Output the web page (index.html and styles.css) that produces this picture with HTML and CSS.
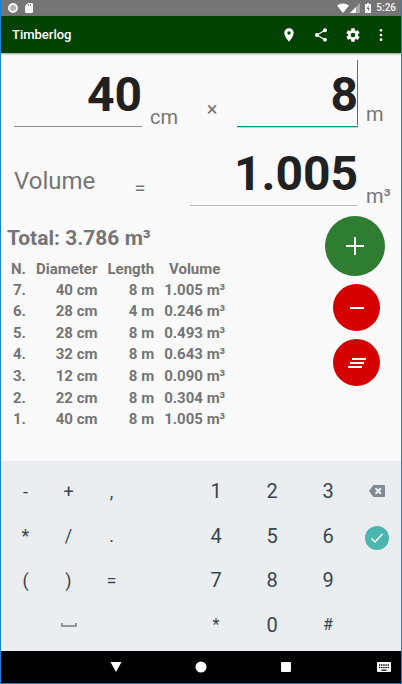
FILE: index.html
```
<!DOCTYPE html>
<html lang="en">
<head>
    <meta charset="UTF-8">
    <meta name="viewport" content="width=device-width, initial-scale=1.0">
    <title>Timberlog</title>
    <link rel="stylesheet" href="styles.css">
</head>
<body>
    <!-- Status Bar -->
    <div class="status-bar">
        <div class="status-group">
            <svg width="10" height="10" viewBox="0 0 10 10"><circle cx="5" cy="5" r="4" fill="#b5b5b5" stroke="#f5f5f5" stroke-width="2"/></svg>
            <svg class="sd-icon" width="8" height="10" viewBox="0 0 8 10"><path fill="#f5f5f5" d="M3 0h4a1 1 0 0 1 1 1v8a1 1 0 0 1-1 1H1a1 1 0 0 1-1-1V3z"/><path stroke="#999" d="M3.500 1v2M5.500 1v2"/></svg>
        </div>
        <div class="status-group status-right">
            <svg width="12" height="10" viewBox="0 0 12 10"><path fill="#fff" d="M0 2.500C3.500-.3 8.500-.3 12 2.500L6 10z"/></svg>
            <svg width="10" height="10" viewBox="0 0 10 10"><path fill="#a8a8a8" d="M10 0v10H0z"/><path fill="#f5f5f5" d="M6 4v6H0z"/></svg>
            <svg class="battery-icon" width="6" height="10" viewBox="0 0 6 10"><path fill="#f5f5f5" d="M2 0h2v1h2v9H0V1h2z"/><path fill="#757575" d="M3.500 2.500 1.500 6H3v2.500L4.700 5H3.500z"/></svg>
            <span class="clock">5:26</span>
        </div>
    </div>

    <!-- App Bar -->
    <header class="app-bar">
        <h1 class="app-title">Timberlog</h1>
        <button class="bar-button" aria-label="Location">
            <svg width="16" height="16" viewBox="0 0 24 24"><path d="M12 2C8.130 2 5 5.130 5 9c0 5.250 7 13 7 13s7-7.750 7-13c0-3.870-3.130-7-7-7zm0 9.500a2.500 2.500 0 1 1 0-5 2.500 2.500 0 0 1 0 5z"/></svg>
        </button>
        <button class="bar-button" aria-label="Share">
            <svg width="16" height="16" viewBox="0 0 24 24"><path d="M18 16.080c-.76 0-1.440.3-1.960.77L8.910 12.700c.05-.23.09-.46.09-.7s-.04-.47-.09-.7l7.050-4.110c.54.5 1.250.81 2.040.81 1.660 0 3-1.340 3-3s-1.340-3-3-3-3 1.340-3 3c0 .24.04.47.09.7L8.040 9.810C7.500 9.310 6.790 9 6 9c-1.660 0-3 1.340-3 3s1.340 3 3 3c.79 0 1.500-.31 2.040-.81l7.120 4.160c-.05.21-.08.43-.08.65 0 1.610 1.310 2.920 2.920 2.920s2.920-1.310 2.920-2.920-1.310-2.920-2.920-2.920z"/></svg>
        </button>
        <button class="bar-button" aria-label="Settings">
            <svg width="16" height="16" viewBox="0 0 24 24"><path d="M19.430 12.980c.04-.32.07-.64.07-.98s-.03-.66-.07-.98l2.110-1.650c.19-.15.24-.42.12-.64l-2-3.460c-.12-.22-.39-.3-.61-.22l-2.490 1c-.52-.4-1.080-.73-1.690-.98l-.38-2.650C14.460 2.180 14.250 2 14 2h-4c-.25 0-.46.18-.49.42l-.38 2.650c-.61.25-1.170.59-1.690.98l-2.490-1c-.23-.09-.49 0-.61.22l-2 3.460c-.13.22-.07.49.12.64l2.110 1.650c-.04.32-.07.65-.07.98s.03.66.07.98l-2.110 1.650c-.19.15-.24.42-.12.64l2 3.460c.12.22.39.3.61.22l2.490-1c.52.4 1.080.73 1.690.98l.38 2.650c.03.24.24.42.49.42h4c.25 0 .46-.18.49-.42l.38-2.650c.61-.25 1.170-.59 1.690-.98l2.490 1c.23.09.49 0 .61-.22l2-3.460c.12-.22.07-.49-.12-.64l-2.110-1.650zM12 15.500a3.500 3.500 0 1 1 0-7 3.500 3.500 0 0 1 0 7z"/></svg>
        </button>
        <button class="bar-button more" aria-label="More">
            <svg width="16" height="16" viewBox="0 0 24 24"><circle cx="12" cy="5" r="2"/><circle cx="12" cy="12" r="2"/><circle cx="12" cy="19" r="2"/></svg>
        </button>
    </header>

    <!-- Calculator -->
    <main class="content">
        <div class="row">
            <div class="field diameter">
                <input id="diameter" type="text" value="40" aria-label="Diameter">
            </div>
            <label class="unit cm" for="diameter">cm</label>
            <span class="operator times">×</span>
            <div class="field length active">
                <input id="length" type="text" value="8" aria-label="Length">
                <span class="caret"></span>
            </div>
            <label class="unit raised" for="length">m</label>
        </div>
        <div class="row">
            <label class="volume-label" for="volume">Volume</label>
            <span class="operator equals">=</span>
            <div class="field result">
                <input id="volume" type="text" value="1.005" readonly>
            </div>
            <span class="unit">m³</span>
        </div>

        <!-- Log -->
        <div class="log">
            <div class="log-list">
                <h2 class="total">Total: 3.786 m³</h2>
                <table class="log-table">
                    <thead>
                        <tr><th>N.</th><th>Diameter</th><th>Length</th><th class="center">Volume</th></tr>
                    </thead>
                    <tbody>
                        <tr><td>7.</td><td>40 cm</td><td>8 m</td><td>1.005 m³</td></tr>
                        <tr><td>6.</td><td>28 cm</td><td>4 m</td><td>0.246 m³</td></tr>
                        <tr><td>5.</td><td>28 cm</td><td>8 m</td><td>0.493 m³</td></tr>
                        <tr><td>4.</td><td>32 cm</td><td>8 m</td><td>0.643 m³</td></tr>
                        <tr><td>3.</td><td>12 cm</td><td>8 m</td><td>0.090 m³</td></tr>
                        <tr><td>2.</td><td>22 cm</td><td>8 m</td><td>0.304 m³</td></tr>
                        <tr><td>1.</td><td>40 cm</td><td>8 m</td><td>1.005 m³</td></tr>
                    </tbody>
                </table>
            </div>
            <div class="actions">
                <button class="fab add" aria-label="Add">
                    <svg width="20" height="20" viewBox="0 0 20 20"><path d="M10 1v18M1 10h18" stroke="#fff" stroke-width="2"/></svg>
                </button>
                <button class="fab remove" aria-label="Remove last">
                    <svg width="20" height="20" viewBox="0 0 20 20"><path d="M3 10h14" stroke="#fff" stroke-width="2"/></svg>
                </button>
                <button class="fab remove" aria-label="Clear all">
                    <svg width="20" height="20" viewBox="0 0 20 20"><path d="M5 6h14M3 10h14M1 14h14" stroke="#fff" stroke-width="2"/></svg>
                </button>
            </div>
        </div>
    </main>

    <!-- Keyboard -->
    <div class="keyboard">
        <button class="key symbol">-</button>
        <button class="key symbol">+</button>
        <button class="key symbol">,</button>
        <span></span>
        <button class="key">1</button>
        <button class="key">2</button>
        <button class="key">3</button>
        <div class="key-actions">
            <button class="key backspace" aria-label="Backspace">
                <svg width="16" height="12" viewBox="0 0 16 12"><path fill="#808b91" d="M5 0h10a1 1 0 0 1 1 1v10a1 1 0 0 1-1 1H5q-.8 0-1.200-.7L0 6 3.800.7Q4.200 0 5 0z"/><path stroke="#ebeef1" stroke-width="2" d="M6.500 3.300l5.400 5.400M11.900 3.300L6.500 8.700"/></svg>
            </button>
            <button class="key done" aria-label="Done">
                <svg width="24" height="24" viewBox="0 0 24 24"><circle cx="12" cy="12" r="12" fill="#4db6ac"/><path d="M6.500 12.500l3.500 3.500 7.500-8" fill="none" stroke="#fff" stroke-width="1.500"/></svg>
            </button>
        </div>

        <button class="key symbol">*</button>
        <button class="key symbol">/</button>
        <button class="key symbol">.</button>
        <span></span>
        <button class="key">4</button>
        <button class="key">5</button>
        <button class="key">6</button>

        <button class="key symbol">(</button>
        <button class="key symbol">)</button>
        <button class="key symbol">=</button>
        <span></span>
        <button class="key">7</button>
        <button class="key">8</button>
        <button class="key">9</button>

        <span></span>
        <button class="key" aria-label="Space">
            <svg width="16" height="6" viewBox="0 0 16 6"><path d="M1 1v3h14V1" fill="none" stroke="#8e989d" stroke-width="2"/></svg>
        </button>
        <span></span>
        <span></span>
        <button class="key small">*</button>
        <button class="key">0</button>
        <button class="key small">#</button>
    </div>

    <!-- Navigation Bar -->
    <nav class="nav-bar">
        <span></span>
        <button aria-label="Back"><svg width="12" height="12" viewBox="0 0 12 12"><path d="M.5 1h11L6 11z"/></svg></button>
        <button aria-label="Home"><svg width="12" height="12" viewBox="0 0 12 12"><circle cx="6" cy="6" r="5.500"/></svg></button>
        <button aria-label="Overview"><svg width="12" height="12" viewBox="0 0 12 12"><rect x="1" y="1" width="10" height="10" rx="1"/></svg></button>
        <button class="switch" aria-label="Switch keyboard"><svg width="14" height="10" viewBox="0 0 14 10"><rect width="14" height="10" rx="1"/><path d="M2 3h10M2 5.500h10" stroke="#000" stroke-width="1.500" stroke-dasharray="1.300 .85"/><path d="M4.500 8.200h5" stroke="#000" stroke-width="1.200"/></svg></button>
    </nav>
</body>
</html>
```
FILE: styles.css
```
/* --- GENERAL STYLING --- */
* {
    box-sizing: border-box;
}

body {
    font-family: Roboto, sans-serif;
    display: flex;
    flex-direction: column;
    min-height: 100vh;
    margin: 0;
    background: #fafafa;
    color: #757575;
    border: 1px solid #1a82d8;
    border-top: none;
}

button {
    display: flex;
    align-items: center;
    justify-content: center;
    padding: 0;
    border: none;
    background: none;
    font-family: inherit;
    cursor: pointer;
}

svg {
    display: block;
}

/* --- STATUS BAR --- */
.status-bar {
    display: flex;
    justify-content: space-between;
    align-items: center;
    height: 16px;
    padding: 0 5px 0 7px;
    background: #757575;
}

.status-group {
    display: flex;
    align-items: center;
}

.sd-icon {
    margin-left: 7px;
}

.status-right {
    gap: 1px;
}

.battery-icon {
    margin: 0 4px;
}

.clock {
    color: #f5f5f5;
    font-size: 10px;
    font-weight: 500;
    line-height: 16px;
}

/* --- APP BAR --- */
.app-bar {
    display: flex;
    align-items: center;
    height: 37px;
    padding: 0 8px 0 11px;
    background: #004200;
    box-shadow: 0 1px 2px rgba(0, 0, 0, 0.4);
}

.app-title {
    flex: 1;
    margin: 0;
    color: #fff;
    font-size: 13px;
    font-weight: 500;
    line-height: 16px;
}

.bar-button {
    width: 32px;
    height: 37px;
    fill: #fff;
}

.bar-button.more {
    width: 24px;
}

/* --- INPUT ROWS --- */
.content {
    flex: 1;
    padding-top: 10px;
}

.row {
    display: flex;
    align-items: flex-end;
    margin-bottom: 15px;
    padding-left: 13px;
}

.field {
    position: relative;
    min-width: 0;
}

.field input {
    display: block;
    width: 100%;
    height: 64px;
    padding: 0;
    border: none;
    border-bottom: 1px solid #8a8a8a;
    outline: none;
    background: none;
    color: #212121;
    font-family: inherit;
    font-size: 48px;
    font-weight: bold;
    text-align: right;
}

.field.diameter {
    flex: 128;
}

.field.length {
    flex: 121;
}

.field.result {
    flex: 168;
}

.field.active input {
    border-bottom-color: #009688;
    box-shadow: 0 1px rgba(0, 150, 136, 0.3);
}

.field.result input {
    border-bottom-color: #bdbdbd;
}

.caret {
    position: absolute;
    top: -3px;
    right: 0;
    bottom: 2px;
    width: 1px;
    background: #009688;
}

.unit {
    width: 43px;
    padding-left: 8px;
    font-size: 20px;
    line-height: 20px;
}

.unit.cm {
    width: 45px;
}

.unit.raised {
    padding-bottom: 3px;
}

.operator {
    width: 50px;
    padding-bottom: 8px;
    font-size: 20px;
    line-height: 20px;
    text-align: center;
}

.operator.equals {
    margin-right: 25px;
}

.volume-label {
    flex: 101;
    padding-bottom: 13px;
    font-size: 24px;
    line-height: 24px;
}

/* --- LOG --- */
.log {
    display: flex;
    justify-content: space-between;
    margin-top: -5px;
    padding: 0 16px 0 6px;
}

.total {
    margin: 9px 0 8px;
    font-size: 21px;
    font-weight: bold;
    line-height: 26px;
}

.log-table {
    height: 171px;
    border-collapse: collapse;
    font-size: 15px;
    font-weight: bold;
}

.log-table th,
.log-table td {
    padding: 0 0 0 10px;
    line-height: 20px;
    text-align: right;
}

.log-table th:first-child,
.log-table td:first-child {
    padding-left: 4px;
}

.log-table th.center {
    text-align: center;
}

.actions {
    display: flex;
    flex-direction: column;
    align-items: flex-end;
    gap: 8px;
}

.fab {
    width: 47px;
    height: 47px;
    border-radius: 50%;
}

.fab.add {
    width: 60px;
    height: 60px;
    background: #2e7d32;
}

.fab.remove {
    margin-right: 5px;
    background: #d50000;
}

/* --- KEYBOARD --- */
.keyboard {
    display: grid;
    grid-template-columns: 43fr 43fr 43fr 55fr 56fr 56fr 56fr 42fr;
    grid-template-rows: repeat(4, 1fr);
    height: 190px;
    padding: 8px 3px 4px;
    background: #ebeef1;
}

.key {
    color: #37474f;
    font-size: 20px;
}

.key.symbol {
    font-size: 18px;
}

.key.small {
    font-size: 16px;
}

.key-actions {
    grid-column: 8;
    grid-row: 1 / 5;
    display: flex;
    flex-direction: column;
}

.key.backspace {
    height: 44px;
}

.key.done {
    height: 50px;
}

/* --- NAVIGATION BAR --- */
.nav-bar {
    display: grid;
    grid-template-columns: 1fr 85px 85px 85px 1fr;
    height: 32px;
    background: #000;
    fill: #fff;
}

.nav-bar .switch {
    justify-content: flex-end;
    padding-right: 10px;
}
```
